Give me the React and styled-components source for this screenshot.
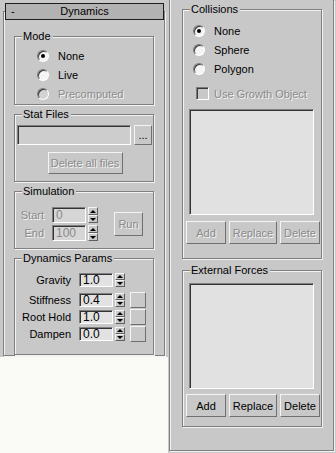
import React from "react";
import styled, { createGlobalStyle, css } from "styled-components";

const GlobalStyle = createGlobalStyle`
  html, body {
    margin: 0;
    padding: 0;
    background: #fafaf6;
  }
  body {
    font-family: "Liberation Sans", Arial, sans-serif;
    font-size: 11px;
    color: #000;
  }
`;

const GRAY = "#c8c8c8";

const disabledText = css`
  color: #8a8a8a;
  text-shadow: 1px 1px 0 #f4f4f4;
`;

const Page = styled.div`
  display: flex;
  width: 336px;
  height: 453px;
  overflow: hidden;
`;

const LeftColumn = styled.div`
  width: 168px;
  display: flex;
  flex-direction: column;
`;

const LeftPanel = styled.div`
  height: 357px;
  box-sizing: border-box;
  padding-top: 3px;
  background: ${GRAY};
`;

const RolloutHeader = styled.div`
  position: relative;
  z-index: 1;
  box-sizing: border-box;
  height: 17px;
  margin: 0 4px 0 5px;
  background: #b2b2b2;
  border: 1px solid #1e1e1e;
  display: flex;
  align-items: center;
  line-height: 15px;
`;

const Collapse = styled.span`
  width: 14px;
  padding-left: 5px;
`;

const HeaderTitle = styled.span`
  flex: 1;
  text-align: center;
  padding-right: 19px;
`;

const etched = css`
  border: 1px solid #808080;
  box-shadow: inset 1px 1px 0 #f2f2f2, 1px 1px 0 #f2f2f2;
`;

const RolloutFrame = styled.div`
  ${etched};
  box-sizing: border-box;
  width: 162px;
  height: 345px;
  margin: -9px 0 0 3px;
  padding: 24px 0 0 10px;
`;

const Group = styled.div`
  ${etched};
  box-sizing: border-box;
  width: 140px;
  height: ${(p) => p.$h}px;
  margin-top: ${(p) => p.$mt || 0}px;
  padding: 0;
`;

const GroupTitle = styled.div`
  width: fit-content;
  margin: -7px 0 0 7px;
  padding: 0 2px 0 1px;
  line-height: 13px;
  background: ${GRAY};
  position: relative;
`;

const RadioList = styled.div`
  display: flex;
  flex-direction: column;
  margin-top: ${(p) => p.$mt}px;
  padding-left: ${(p) => p.$pl}px;
`;

const RadioRow = styled.div`
  height: 19px;
  display: flex;
  align-items: center;
  gap: 9px;
  ${(p) => p.$disabled && disabledText};
`;

const RadioDot = styled.span`
  box-sizing: border-box;
  width: 12px;
  height: 12px;
  border-radius: 50%;
  border: 1px solid;
  border-color: #7a7a7a #ffffff #ffffff #7a7a7a;
  background: ${(p) => (p.$disabled ? "#d2d2d2" : "#f4f4f4")};
  box-shadow: inset 1px 1px 0 #3a3a3a;
  display: flex;
  align-items: center;
  justify-content: center;
  text-shadow: none;
  &::after {
    content: "";
    width: 4px;
    height: 4px;
    border-radius: 50%;
    background: ${(p) => (p.$checked ? "#000" : "transparent")};
  }
`;

const CheckRow = styled.div`
  display: flex;
  align-items: center;
  gap: 5px;
  height: 13px;
  margin: 9px 0 0 13px;
  ${disabledText};
`;

const CheckBox = styled.span`
  box-sizing: border-box;
  width: 13px;
  height: 13px;
  border: 1px solid;
  border-color: #7a7a7a #ffffff #ffffff #7a7a7a;
  box-shadow: inset 1px 1px 0 #3a3a3a;
  background: ${GRAY};
`;

const sunken = css`
  box-sizing: border-box;
  border: 1px solid;
  border-color: #808080 #ffffff #ffffff #808080;
  box-shadow: inset 1px 1px 0 #333;
`;

const raised = css`
  box-sizing: border-box;
  border: 1px solid;
  border-color: #f4f4f4 #707070 #707070 #f4f4f4;
  background: ${GRAY};
  font-family: inherit;
  font-size: 11px;
  padding: 0;
  display: flex;
  align-items: center;
  justify-content: center;
`;

const FileRow = styled.div`
  display: flex;
  gap: 3px;
  margin: 4px 0 0 2px;
`;

const FileField = styled.div`
  ${sunken};
  width: 114px;
  height: 20px;
  background: #cdcdcd;
`;

const Button = styled.button`
  ${raised};
  width: ${(p) => p.$w}px;
  height: ${(p) => p.$h}px;
  color: #000;
  ${(p) => p.$disabled && disabledText};
`;

const CenterRow = styled.div`
  display: flex;
  justify-content: center;
  margin-top: ${(p) => p.$mt}px;
  padding-left: 2px;
`;

const SimBody = styled.div`
  display: flex;
  align-items: center;
  margin-top: 9px;
`;

const SimRows = styled.div`
  display: flex;
  flex-direction: column;
  gap: 2px;
`;

const SpinRow = styled.div`
  display: flex;
  align-items: center;
  height: ${(p) => p.$h}px;
  margin-bottom: ${(p) => p.$mb || 0}px;
`;

const SpinLabel = styled.span`
  width: ${(p) => p.$w}px;
  text-align: right;
  margin-right: 8px;
  ${(p) => p.$disabled && disabledText};
`;

const SpinField = styled.div`
  ${sunken};
  width: 34px;
  height: ${(p) => p.$h}px;
  background: ${(p) => (p.$disabled ? "#d6d6d6" : "#e2e2e2")};
  padding-left: 3px;
  line-height: ${(p) => p.$h - 2}px;
  font-size: 12px;
  color: ${(p) => (p.$disabled ? "#8a8a8a" : "#000")};
`;

const Spinner = styled.div`
  display: flex;
  flex-direction: column;
  width: 10px;
  height: ${(p) => p.$h}px;
  margin-left: 2px;
`;

const SpinHalf = styled.div`
  ${raised};
  flex: 1;
  border-color: #f4f4f4 #606060 #606060 #f4f4f4;
  &::after {
    content: "";
    border-left: 3px solid transparent;
    border-right: 3px solid transparent;
    ${(p) =>
      p.$up
        ? "border-bottom: 3px solid #000;"
        : "border-top: 3px solid #000;"}
  }
`;

const RunWrap = styled.div`
  margin-left: 16px;
`;

const ParamRows = styled.div`
  margin-top: 8px;
`;

const SideButton = styled.div`
  ${raised};
  width: 16px;
  height: 16px;
  margin-left: 5px;
`;

const Filler = styled.div`
  flex: 1;
  background: #fafaf6;
`;

const RightColumn = styled.div`
  width: 168px;
  height: 453px;
  background: ${GRAY};
  padding-left: 1px;
  box-sizing: border-box;
`;

const RightFrame = styled.div`
  box-sizing: border-box;
  width: 165px;
  height: 451px;
  border: 1px solid #808080;
  border-top: none;
  box-shadow: inset 1px 0 0 #f2f2f2, 1px 1px 0 #f2f2f2;
  padding: 9px 0 0 12px;
`;

const ListBox = styled.div`
  ${sunken};
  width: 125px;
  height: 106px;
  margin: ${(p) => p.$mt}px 0 0 6px;
  background: #e1e1e1;
`;

const ButtonRow = styled.div`
  display: flex;
  gap: 3px;
  margin: ${(p) => p.$mt}px 0 0 3px;
`;

function Spin({ label, labelWidth, value, h, disabled, mb, side }) {
  return (
    <SpinRow $h={side ? 17 : h} $mb={mb}>
      <SpinLabel $w={labelWidth} $disabled={disabled}>
        {label}
      </SpinLabel>
      <SpinField $h={h} $disabled={disabled}>
        {value}
      </SpinField>
      <Spinner $h={h}>
        <SpinHalf $up />
        <SpinHalf />
      </Spinner>
      {side && <SideButton />}
    </SpinRow>
  );
}

function Radio({ label, checked, disabled }) {
  return (
    <RadioRow $disabled={disabled}>
      <RadioDot $checked={checked} $disabled={disabled} />
      <span>{label}</span>
    </RadioRow>
  );
}

export default function App() {
  return (
    <Page>
      <GlobalStyle />
      <LeftColumn>
        <LeftPanel>
          <RolloutHeader>
            <Collapse>-</Collapse>
            <HeaderTitle>Dynamics</HeaderTitle>
          </RolloutHeader>
          <RolloutFrame>
            <Group $h={69}>
              <GroupTitle>Mode</GroupTitle>
              <RadioList $mt={3} $pl={22}>
                <Radio label="None" checked />
                <Radio label="Live" />
                <Radio label="Precomputed" disabled />
              </RadioList>
            </Group>

            <Group $h={68} $mt={9}>
              <GroupTitle>Stat Files</GroupTitle>
              <FileRow>
                <FileField />
                <Button $w={18} $h={20}>
                  ...
                </Button>
              </FileRow>
              <CenterRow $mt={7}>
                <Button $w={75} $h={22} $disabled>
                  Delete all files
                </Button>
              </CenterRow>
            </Group>

            <Group $h={58} $mt={9}>
              <GroupTitle>Simulation</GroupTitle>
              <SimBody>
                <SimRows>
                  <Spin label="Start" labelWidth={29} value="0" h={16} disabled />
                  <Spin label="End" labelWidth={29} value="100" h={16} disabled />
                </SimRows>
                <RunWrap>
                  <Button $w={29} $h={24} $disabled>
                    Run
                  </Button>
                </RunWrap>
              </SimBody>
            </Group>

            <Group $h={97} $mt={9}>
              <GroupTitle>Dynamics Params</GroupTitle>
              <ParamRows>
                <Spin label="Gravity" labelWidth={56} value="1.0" h={14} mb={4} />
                <Spin label="Stiffness" labelWidth={56} value="0.4" h={14} side />
                <Spin label="Root Hold" labelWidth={56} value="1.0" h={14} side />
                <Spin label="Dampen" labelWidth={56} value="0.0" h={14} side />
              </ParamRows>
            </Group>
          </RolloutFrame>
        </LeftPanel>
        <Filler />
      </LeftColumn>

      <RightColumn>
        <RightFrame>
          <Group $h={250}>
            <GroupTitle>Collisions</GroupTitle>
            <RadioList $mt={5} $pl={10}>
              <Radio label="None" checked />
              <Radio label="Sphere" />
              <Radio label="Polygon" />
            </RadioList>
            <CheckRow>
              <CheckBox />
              <span>Use Growth Object</span>
            </CheckRow>
            <ListBox $mt={9} />
            <ButtonRow $mt={6}>
              <Button $w={40} $h={23} $disabled>
                Add
              </Button>
              <Button $w={48} $h={23} $disabled>
                Replace
              </Button>
              <Button $w={40} $h={23} $disabled>
                Delete
              </Button>
            </ButtonRow>
          </Group>

          <Group $h={157} $mt={11}>
            <GroupTitle>External Forces</GroupTitle>
            <ListBox $mt={6} />
            <ButtonRow $mt={5}>
              <Button $w={40} $h={23}>
                Add
              </Button>
              <Button $w={48} $h={23}>
                Replace
              </Button>
              <Button $w={40} $h={23}>
                Delete
              </Button>
            </ButtonRow>
          </Group>
        </RightFrame>
      </RightColumn>
    </Page>
  );
}
